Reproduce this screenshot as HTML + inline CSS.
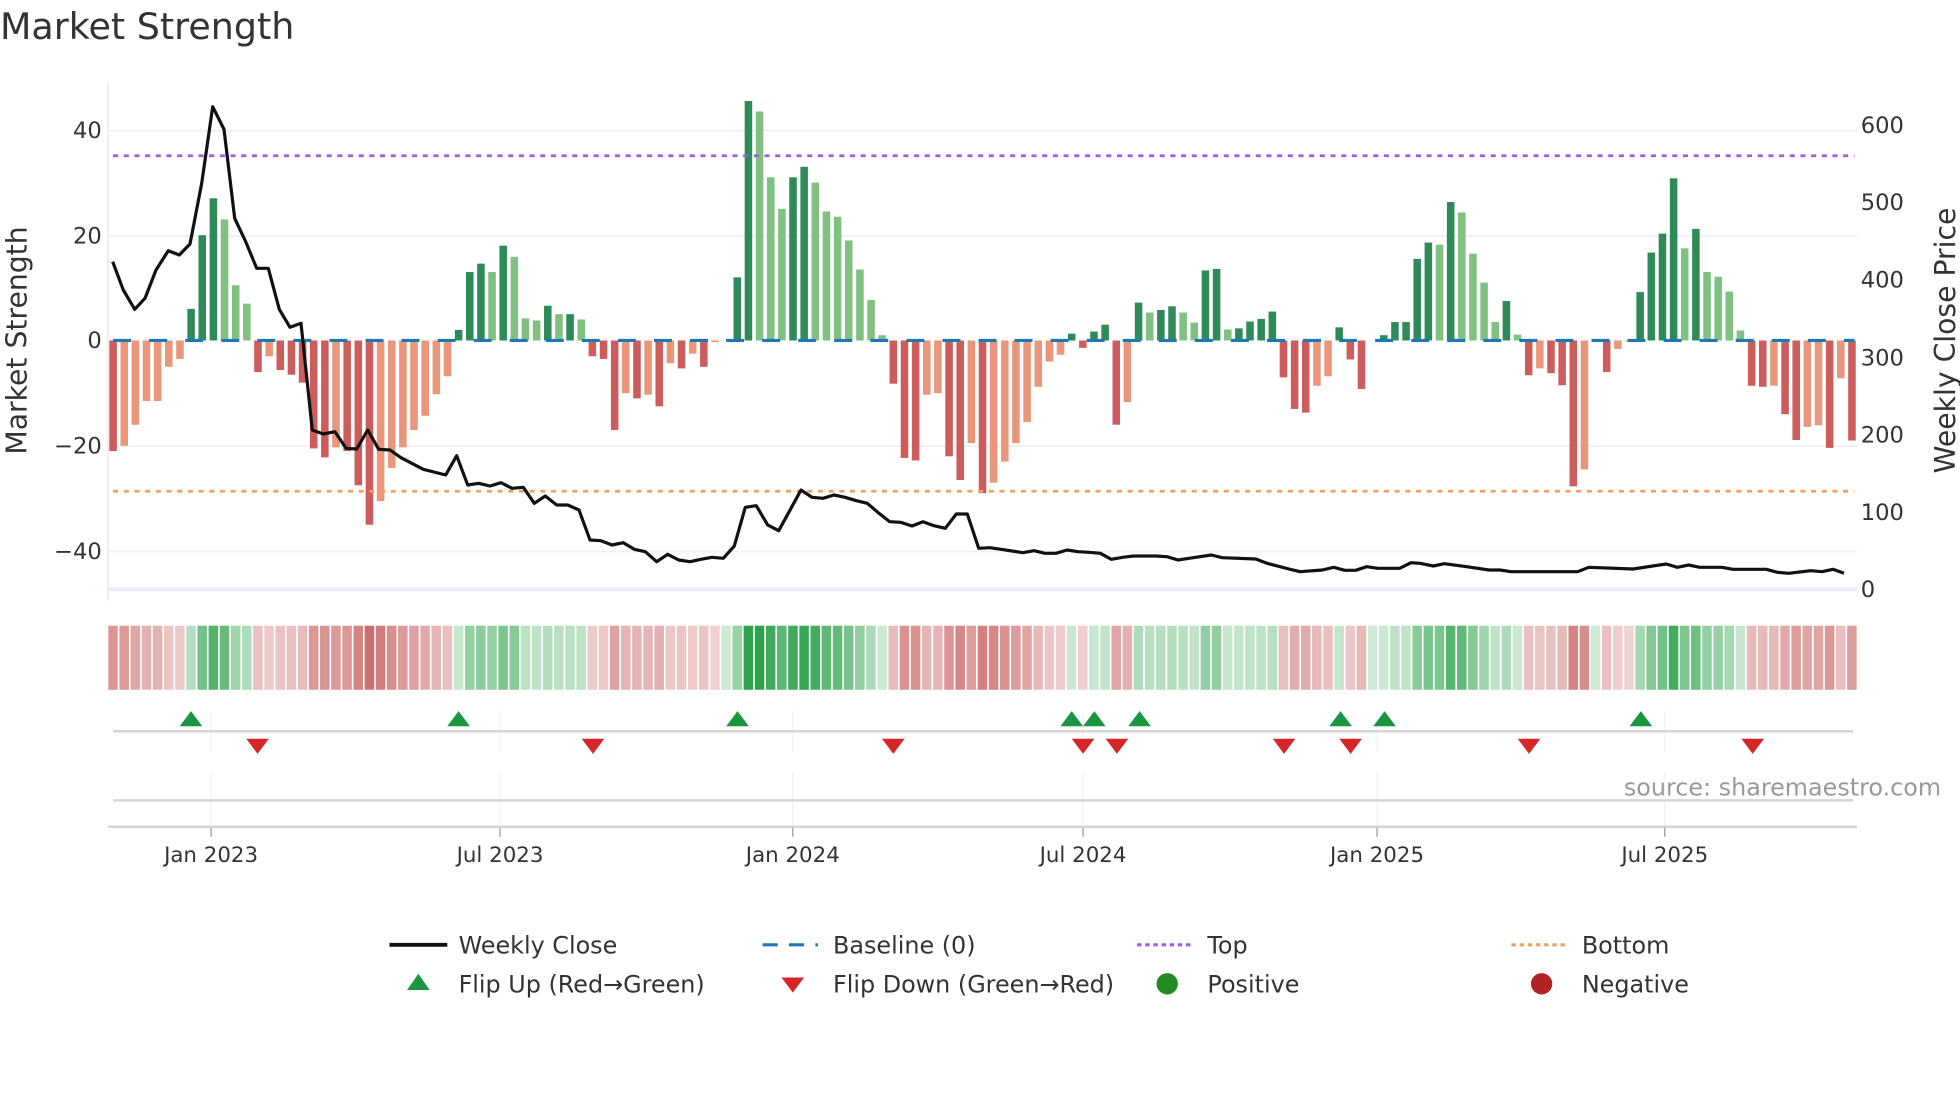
<!DOCTYPE html>
<html><head><meta charset="utf-8"><style>
html,body{margin:0;padding:0;background:#fff;}
svg{display:block;font-family:"DejaVu Sans","Liberation Sans",sans-serif;}
</style></head><body>
<svg id="s" width="1960" height="1102" viewBox="0 0 1960 1102" xmlns="http://www.w3.org/2000/svg">
<g id="d" transform="scale(1.25641)">
<text x="0" y="31" font-size="29" fill="#333">Market Strength</text>
<line x1="86" y1="65" x2="86" y2="478" stroke="#e6e6e6" stroke-width="1"/>
<g stroke="#eef0f4" stroke-width="1.5">
<line x1="86" y1="104" x2="1478" y2="104"/><line x1="86" y1="188" x2="1478" y2="188"/>
<line x1="86" y1="355" x2="1478" y2="355"/><line x1="86" y1="439" x2="1478" y2="439"/>
</g>
<line x1="86" y1="469" x2="1478" y2="469" stroke="#e5ecf6" stroke-width="3"/>
<g id="bars"></g>
<line x1="90" y1="271" x2="1476" y2="271" stroke="#1f77b4" stroke-width="2.5" stroke-dasharray="14.3,14.4"/>
<line x1="90" y1="124" x2="1476" y2="124" stroke="#9b5de5" stroke-width="2.2" stroke-dasharray="4,4.5"/>
<line x1="90" y1="391" x2="1476" y2="391" stroke="#f0a060" stroke-width="2.2" stroke-dasharray="4,4.5"/>
<g font-size="18" fill="#333" text-anchor="end">
<text x="81" y="110">40</text><text x="81" y="194">20</text><text x="81" y="277">0</text>
<text x="81" y="361">−20</text><text x="81" y="445">−40</text></g>
<g font-size="18" fill="#333">
<text x="1481" y="106">600</text><text x="1481" y="167">500</text><text x="1481" y="229">400</text>
<text x="1481" y="291">300</text><text x="1481" y="352">200</text><text x="1481" y="414">100</text><text x="1481" y="475">0</text></g>
<text transform="translate(21,271) rotate(-90)" font-size="22.5" fill="#333" text-anchor="middle">Market Strength</text>
<text transform="translate(1556,271) rotate(-90)" font-size="22.5" fill="#333" text-anchor="middle">Weekly Close Price</text>
<g id="heat"></g>
<g stroke="#eef2f6" stroke-width="1">
<line x1="168" y1="566" x2="168" y2="598"/><line x1="398" y1="566" x2="398" y2="598"/><line x1="631" y1="566" x2="631" y2="598"/><line x1="862" y1="566" x2="862" y2="598"/><line x1="1096" y1="566" x2="1096" y2="598"/><line x1="1325" y1="566" x2="1325" y2="598"/>
<line x1="168" y1="614" x2="168" y2="656"/><line x1="398" y1="614" x2="398" y2="656"/><line x1="631" y1="614" x2="631" y2="656"/><line x1="862" y1="614" x2="862" y2="656"/><line x1="1096" y1="614" x2="1096" y2="656"/><line x1="1325" y1="614" x2="1325" y2="656"/>
</g>
<line x1="90" y1="582" x2="1475" y2="582" stroke="#d4d4d4" stroke-width="2"/>
<line x1="90" y1="637" x2="1475" y2="637" stroke="#d4d4d4" stroke-width="2"/>
<line x1="86" y1="658" x2="1478" y2="658" stroke="#d4d4d4" stroke-width="2"/>
<g stroke="#999" stroke-width="1">
<line x1="168" y1="659" x2="168" y2="666"/><line x1="398" y1="659" x2="398" y2="666"/><line x1="631" y1="659" x2="631" y2="666"/><line x1="862" y1="659" x2="862" y2="666"/><line x1="1096" y1="659" x2="1096" y2="666"/><line x1="1325" y1="659" x2="1325" y2="666"/></g>
<g id="flips"></g>
<g font-size="17" fill="#333" text-anchor="middle">
<text x="168" y="686">Jan 2023</text><text x="398" y="686">Jul 2023</text><text x="631" y="686">Jan 2024</text>
<text x="862" y="686">Jul 2024</text><text x="1096" y="686">Jan 2025</text><text x="1325" y="686">Jul 2025</text></g>
<text x="1545" y="633" font-size="19" fill="#999" text-anchor="end">source: sharemaestro.com</text>
<g font-size="19" fill="#333">
<line x1="310" y1="752" x2="356" y2="752" stroke="#111" stroke-width="3"/>
<text x="365" y="759">Weekly Close</text>
<line x1="607" y1="752" x2="651" y2="752" stroke="#1f77b4" stroke-width="2.5" stroke-dasharray="12,9"/>
<text x="663" y="759">Baseline (0)</text>
<line x1="905" y1="752" x2="949" y2="752" stroke="#9b5de5" stroke-width="2.5" stroke-dasharray="3.5,3"/>
<text x="961" y="759">Top</text>
<line x1="1203" y1="752" x2="1247" y2="752" stroke="#f0a060" stroke-width="2.5" stroke-dasharray="3.5,3"/>
<text x="1259" y="759">Bottom</text>
<polygon points="324,788 342,788 333,775" fill="#1a9641"/>
<text x="365" y="790">Flip Up (Red→Green)</text>
<polygon points="622,778 640,778 631,790" fill="#d62728"/>
<text x="663" y="790">Flip Down (Green→Red)</text>
<circle cx="929" cy="783" r="8.5" fill="#228b22"/>
<text x="961" y="790">Positive</text>
<circle cx="1227" cy="783" r="8.5" fill="#b22222"/>
<text x="1259" y="790">Negative</text>
</g>
</g>
<polyline id="pl" fill="none" stroke="#111" stroke-width="3.2" stroke-linejoin="round" points="112.7,261.7 123.3,290 134.7,309.3 145,298.3 156,270 168.3,250.7 179.3,255 190,244 201.7,183.3 212.7,106.7 224,129.3 234.7,218.3 245.7,241.7 256.7,268.3 268.3,268.3 279.3,309.3 290,327.3 301,323.3 312.3,430 323.3,434 335,431.7 346,448.3 356.7,449 367.7,430 378.7,449.3 390,450 401,457.7 423.3,469.3 445.7,475 456.7,455.7 467.7,485 478.7,483.3 490,486 501,482.7 512,488.3 523.3,487.3 534.3,503.3 545.3,496 556.7,505 567.7,505 579,510 590,540 601,540.7 612,545 623.3,542.7 634.3,549.3 645.3,551.7 656.7,561.7 667.7,554.3 678.7,560 690,561.7 701,559.3 712,557.3 723.3,558.3 734.3,546 745.3,507.3 756.3,505.7 767.7,525 778.7,530.7 789.7,510.7 801,490 812,497.3 823,498.3 834,495 845,497.3 856.3,500.7 867.3,503.3 878.3,512.7 889.7,521.7 900.7,522.3 912,526 923,521.7 934,525.7 945.3,528.3 956.3,514 967.3,514 978.7,548.3 990,547.7 1001,549.3 1012,551 1023,552.7 1034,550.7 1045,553.3 1056,553.3 1067,550 1078,551.7 1089,552.3 1100.3,553.3 1111.3,559.3 1122.7,557.3 1133.7,556 1155.7,556 1167,556.7 1178,560 1189,558.3 1211.3,555 1222.3,557.7 1255.7,559 1267,563.3 1289,569 1300,571.7 1322.3,570 1333.7,567.3 1344.7,570.3 1355.7,570.3 1366.7,566.7 1377.7,568.3 1399.7,568.3 1411,562.7 1420,563.3 1433.3,566 1444.3,563.7 1466.7,566.7 1489,570 1500,570 1511,571.7 1577.7,571.7 1588.7,567.3 1633,569 1666.3,564 1677.3,567.3 1688.7,565 1699.7,567.3 1721.7,567.3 1733,569.3 1766.3,569.3 1777.3,572.3 1788.7,573.3 1810.7,570.7 1822,571.7 1833,569.3 1844,573.3"/>
</svg>
<script>
var raw="R-21 S-20 S-16 S-11.5 S-11.5 S-5 S-3.5 D6 D20 D27 L23 L10.5 L7 R-6 S-3 R-5.6 R-6.5 R-8 R-20.5 R-22.2 S-20.3 R-21 R-27.5 R-35 S-30.5 S-24.2 S-20.3 S-17 S-14.3 S-10.2 S-6.8 D2 D13 D14.6 L13 D18 L15.9 L4.2 L3.8 D6.6 L5 D5 L4 R-3 R-3.5 R-17 S-10 R-11 S-10.3 R-12.5 S-4.3 R-5.3 S-2.5 R-5 S-0.3 N0 D12 D45.5 L43.5 L31 L25 D31 D33 L30 L24.5 L23.5 L19 L13.5 L7.7 L1 R-8.2 R-22.3 R-22.8 S-10.3 S-10 R-22 R-26.5 S-19.5 R-29 S-27 S-23 S-19.5 S-15.5 S-8.8 S-4 S-2.7 D1.3 R-1.4 D1.7 D3 R-16 S-11.7 D7.2 L5.3 D5.8 D6.5 L5.3 L3.4 D13.3 D13.6 L2.1 D2.3 D3.6 D4.1 D5.5 R-7 R-13 R-13.7 S-8.6 S-6.8 D2.5 R-3.6 R-9.2 N0 D1 D3.5 D3.5 D15.5 D18.6 L18.2 D26.3 L24.3 L16.5 L11 L3.5 D7.5 L1.1 R-6.6 S-5.3 R-6.2 R-8.5 R-27.7 S-24.5 N0 R-6 S-1.6 S-0.2 D9.2 D16.7 D20.3 D30.8 L17.5 D21.2 L13 L12.1 L9.3 L1.9 R-8.6 R-8.8 S-8.6 R-14 R-18.9 S-16.4 S-16.1 R-20.4 S-7.2 R-19".split(" ");
var col={R:"#cd5c5c",S:"#e9967a",D:"#2e8b57",L:"#80c080",N:"#fff"};
var NS="http://www.w3.org/2000/svg",bars=document.getElementById("bars"),heat=document.getElementById("heat");
function el(p,t,a){var e=document.createElementNS(NS,t);for(var k in a)e.setAttribute(k,a[k]);p.appendChild(e);return e;}
function mix(c,a){return "rgb("+c.map(function(v){return Math.round(255+(v-255)*a)}).join(",")+")";}
var step=(1474-90)/156;
raw.forEach(function(s,i){
 var c=s[0],v=parseFloat(s.slice(1)),x=90+i*step;
 if(c!="N"&&v!=0){var h=Math.abs(v)*4.19;el(bars,"rect",{x:x-3,y:v>0?271-h:271,width:6,height:h,fill:col[c]});}
 var t=Math.min(Math.abs(v)/35,1),f;
 if(v>=0&&c!="R"&&c!="S")f=mix([40,160,70],0.22+0.75*t);else f=mix([200,95,95],0.28+0.62*t);
 el(heat,"rect",{x:x-step/2+0.6,y:498,width:step-1.3,height:51,fill:f});
});
var fl=document.getElementById("flips");
[152,365,587,853,871,907,1067,1102,1306].forEach(function(x){el(fl,"polygon",{points:(x-9)+",578 "+(x+9)+",578 "+x+",566",fill:"#1a9641"});});
[205,472,711,862,889,1022,1075,1217,1395].forEach(function(x){el(fl,"polygon",{points:(x-9)+",588 "+(x+9)+",588 "+x+",600",fill:"#d62728"});});
</script>
</body></html>
